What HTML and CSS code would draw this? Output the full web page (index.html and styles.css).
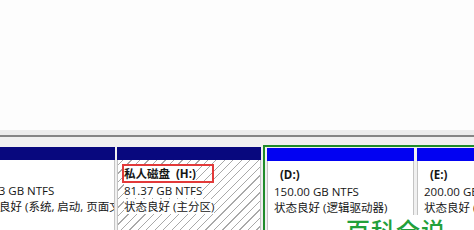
FILE: index.html
```html
<!DOCTYPE html>
<html lang="zh-CN">
<head>
<meta charset="utf-8">
<title>磁盘管理</title>
<link rel="stylesheet" href="styles.css">
</head>
<body>
<div class="screen">
  <div class="top-pane"></div>
  <div class="splitter"></div>
  <div class="map">
    <div class="row">
      <div class="part primary c1">
        <div class="bar"></div>
        <div class="body">
          <div class="label"><span>(C:)</span></div>
          <div class="line"><span>99.63 GB NTFS</span></div>
          <div class="line"><span>状态良好 (系统, 启动, 页面文件, 活动, 故障转储, 主分区)</span></div>
        </div>
      </div>
      <div class="part primary c2">
        <div class="bar"></div>
        <div class="body hatched">
          <div class="label marked"><span>私人磁盘  (H:)</span></div>
          <div class="line"><span>81.37 GB NTFS</span></div>
          <div class="line"><span>状态良好 (主分区)</span></div>
        </div>
      </div>
      <div class="extended">
        <div class="part logical cd">
          <div class="bar"></div>
          <div class="body">
            <div class="label"><span>  (D:)</span></div>
            <div class="line"><span>150.00 GB NTFS</span></div>
            <div class="line"><span>状态良好 (逻辑驱动器)</span></div>
          </div>
        </div>
        <div class="part logical ce">
          <div class="bar"></div>
          <div class="body">
            <div class="label"><span>  (E:)</span></div>
            <div class="line"><span>200.00 GB NTFS</span></div>
            <div class="line"><span>状态良好 (逻辑驱动器)</span></div>
          </div>
        </div>
      </div>
    </div>
  </div>
  <div class="watermark">百科全说</div>
</div>
</body>
</html>
```

FILE: styles.css
```css
html, body {
  margin: 0;
  padding: 0;
}
body {
  background: #fdfdfd;
  font-family: "Open Sans", "Noto Sans CJK SC", sans-serif;
  font-size: 11.5px;
  color: #161616;
}
.screen {
  position: relative;
  width: 474px;
  height: 230px;
  overflow: hidden;
}
.top-pane {
  height: 130px;
  background: #fdfdfd;
}
.splitter {
  height: 5px;
  background: #ececec;
  border-bottom: 2px solid #858585;
}
.map {
  background: #f0f0f0;
  padding-top: 8px;
  height: 200px;
}
.row {
  display: flex;
  align-items: stretch;
  margin-left: -31px;
  height: 100%;
}
.part {
  display: flex;
  flex-direction: column;
  flex: none;
}
.primary {
  margin-top: 2px;
}
.c1 { width: 146px; margin-right: 2px; }
.c2 { width: 144px; margin-right: 2px; }
.extended {
  display: flex;
  gap: 3px;
  border-left: 2px solid #1f8c2a;
  border-top: 2px solid #1f8c2a;
  padding: 1px 0 0 2px;
  flex: 1;
}
.cd { width: 147px; }
.ce { width: 140px; }
.bar {
  height: 13px;
  flex: none;
}
.primary .bar { background: #08087e; }
.logical .bar { background: #0202f2; }
.body {
  flex: 1;
  background: #ffffff;
  border: 1px solid #c4c4c4;
  border-top: none;
  padding: 4px 4px 0 4px;
  overflow: hidden;
  white-space: nowrap;
}
.hatched {
  background: repeating-linear-gradient(135deg, #ffffff 0 3px, #a9a9a9 3px 4px, #ffffff 4px 6px);
}
.label {
  height: 15px;
  line-height: 15px;
  font-weight: bold;
  border: 2px solid transparent;
  width: fit-content;
}
.label span, .line span {
  background: #ffffff;
  white-space: pre;
}
.marked {
  border-color: #e23a3a;
  padding-right: 16px;
}
.line {
  height: 16px;
  line-height: 16px;
  padding-left: 2px;
}
.watermark {
  position: absolute;
  left: 342px;
  top: 215px;
  padding: 0 4px;
  width: 140px;
  height: 30px;
  background: #ffffff;
  color: #22a03a;
  font-family: "Noto Sans CJK SC", sans-serif;
  font-size: 24px;
  font-weight: 500;
  line-height: 30px;
  letter-spacing: 1px;
}
```
